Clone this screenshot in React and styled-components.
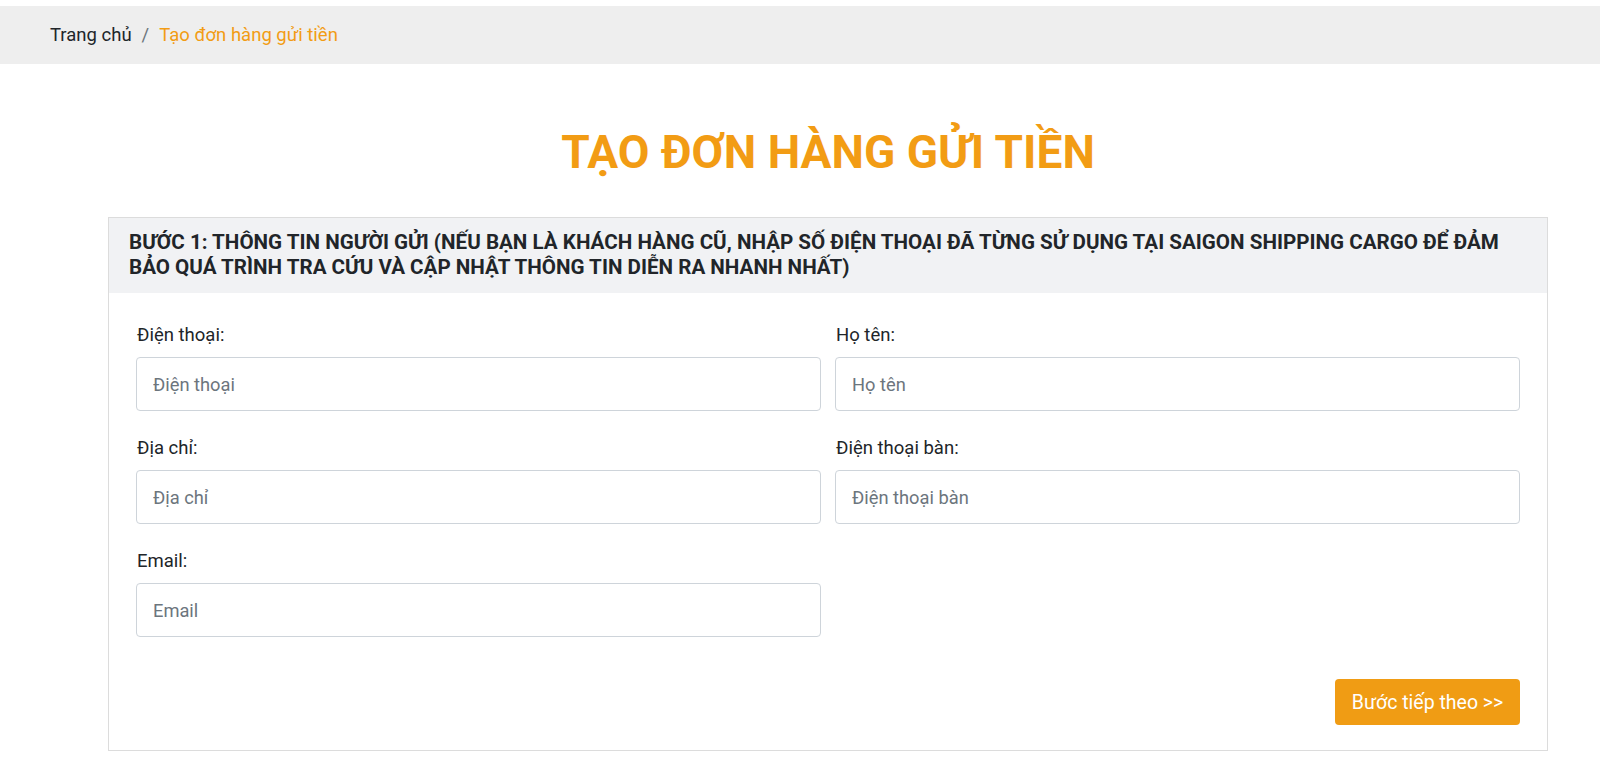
import styled, { createGlobalStyle } from "styled-components";

const GlobalStyle = createGlobalStyle`
  body {
    margin: 0;
    background: #fff;
    font-family: Roboto, "Noto Sans", Arial, sans-serif;
    color: #212529;
  }
  * {
    box-sizing: border-box;
  }
`;

const FIELDS = [
  { name: "phone", label: "Điện thoại:", placeholder: "Điện thoại" },
  { name: "fullname", label: "Họ tên:", placeholder: "Họ tên" },
  { name: "address", label: "Địa chỉ:", placeholder: "Địa chỉ" },
  { name: "landline", label: "Điện thoại bàn:", placeholder: "Điện thoại bàn" },
  { name: "email", label: "Email:", placeholder: "Email" },
];

const Breadcrumb = styled.nav`
  margin-top: 6px;
  height: 58px;
  background-color: #eeeeee;
  display: flex;
  align-items: center;
  padding-left: 50px;
  font-size: 18.5px;
`;

const Crumb = styled.a`
  color: ${(props) => (props.$active ? "#f29c14" : "#212529")};
  text-decoration: none;
`;

const Divider = styled.span`
  color: #6c757d;
  padding: 0 10px;
`;

const Title = styled.h1`
  margin: 58px 0 0 108px;
  width: 1440px;
  text-align: center;
  font-size: 46px;
  font-weight: 700;
  line-height: 60px;
  color: #f29c14;
`;

const Card = styled.section`
  margin: 35px 0 30px 108px;
  width: 1440px;
  border: 1px solid #dcdcdc;
`;

const CardHeader = styled.header`
  background-color: #f1f2f4;
  padding: 12px 20px 13px;
  min-height: 75px;
  font-size: 20.6px;
  font-weight: 700;
  line-height: 25px;
  color: #212529;
`;

const CardBody = styled.div`
  padding: 30px 27px 25px;
`;

const FormGrid = styled.div`
  display: grid;
  grid-template-columns: 1fr 1fr;
  column-gap: 14px;
  row-gap: 25px;
`;

const Field = styled.div`
  display: flex;
  flex-direction: column;
`;

const Label = styled.label`
  font-size: 18.5px;
  line-height: 24px;
  margin-bottom: 10px;
  padding-left: 1px;
`;

const Input = styled.input`
  height: 54px;
  border: 1px solid #ced4da;
  border-radius: 4px;
  padding: 0 16px;
  font-family: inherit;
  font-size: 18.3px;
  color: #495057;

  &::placeholder {
    color: #6c757d;
  }
`;

const Actions = styled.div`
  display: flex;
  justify-content: flex-end;
  margin-top: 42px;
`;

const NextButton = styled.button`
  width: 185px;
  height: 46px;
  border: none;
  border-radius: 4px;
  background-color: #f09c14;
  color: #fff;
  font-family: inherit;
  font-size: 19.5px;
  cursor: pointer;
`;

const App = () => {
  return (
    <>
      <GlobalStyle />
      <Breadcrumb>
        <Crumb href="#">Trang chủ</Crumb>
        <Divider>/</Divider>
        <Crumb $active>Tạo đơn hàng gửi tiền</Crumb>
      </Breadcrumb>

      <Title>TẠO ĐƠN HÀNG GỬI TIỀN</Title>

      <Card>
        <CardHeader>
          BƯỚC 1: THÔNG TIN NGƯỜI GỬI (NẾU BẠN LÀ KHÁCH HÀNG CŨ, NHẬP SỐ ĐIỆN
          THOẠI ĐÃ TỪNG SỬ DỤNG TẠI SAIGON SHIPPING CARGO ĐỂ ĐẢM BẢO QUÁ TRÌNH
          TRA CỨU VÀ CẬP NHẬT THÔNG TIN DIỄN RA NHANH NHẤT)
        </CardHeader>
        <CardBody>
          <FormGrid>
            {FIELDS.map((field) => (
              <Field key={field.name}>
                <Label htmlFor={field.name}>{field.label}</Label>
                <Input id={field.name} placeholder={field.placeholder} />
              </Field>
            ))}
          </FormGrid>
          <Actions>
            <NextButton type="button">Bước tiếp theo &gt;&gt;</NextButton>
          </Actions>
        </CardBody>
      </Card>
    </>
  );
};
export default App;
